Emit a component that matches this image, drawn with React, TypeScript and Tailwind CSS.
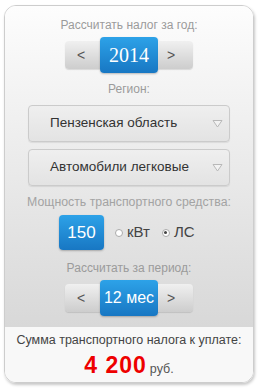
import React from "react";

function Stepper({ value, serif }: { value: string; serif?: boolean }) {
  return (
    <div className="flex items-center h-[36px]">
      <div className="w-[35px] h-[28px] rounded-l-[4px] bg-linear-to-b from-[#f0f0f0] to-[#cdcdcd] shadow-[0_1px_1px_rgba(0,0,0,0.12)] flex items-center pl-[12px] text-[14px] text-[#555] leading-none">
        &lt;
      </div>
      <div
        className={
          "w-[58px] h-[36px] rounded-[4px] bg-linear-to-b from-[#2da2e8] to-[#1877c3] shadow-[0_1px_2px_rgba(0,0,0,0.25)] flex items-center justify-center text-white leading-none " +
          (serif ? "font-['Liberation_Serif',serif] text-[20px]" : "text-[16px]")
        }
      >
        {value}
      </div>
      <div className="w-[35px] h-[28px] rounded-r-[4px] bg-linear-to-b from-[#f0f0f0] to-[#cdcdcd] shadow-[0_1px_1px_rgba(0,0,0,0.12)] flex items-center pl-[9px] text-[14px] text-[#555] leading-none">
        &gt;
      </div>
    </div>
  );
}

function Select({ label, className }: { label: string; className?: string }) {
  return (
    <div
      className={
        "w-[202px] h-[37px] rounded-[4px] border border-[#cbcbcb] bg-linear-to-b from-[#efefef] to-[#e3e3e3] shadow-[0_1px_1px_rgba(0,0,0,0.08)] flex items-center justify-between pl-[21px] pr-[6px] text-[13.5px] text-[#333] " +
        (className ?? "")
      }
    >
      <span>{label}</span>
      <svg width="11" height="9" viewBox="0 0 11 9">
        <path d="M1 1.5 H10 L5.5 8 Z" fill="#f2f2f2" stroke="#b8b8b8" strokeWidth="1" strokeLinejoin="round" />
      </svg>
    </div>
  );
}

function Radio({ checked }: { checked?: boolean }) {
  return (
    <span className="w-[8px] h-[8px] rounded-full border border-[#aaa] bg-white flex items-center justify-center">
      {checked && <span className="w-[3px] h-[3px] rounded-full bg-[#444]" />}
    </span>
  );
}

export default function App() {
  return (
    <div className="w-[262px] h-[388px] bg-white pt-[5px] pl-[4px] font-['Liberation_Sans',Arial,sans-serif]">
      <div className="w-[250px] h-[378px] rounded-[12px] border border-[#cdcdcd] overflow-hidden shadow-[1px_2px_3px_rgba(0,0,0,0.22)] flex flex-col">
        <div className="h-[321px] bg-linear-to-b from-[#fdfdfd] to-[#d8d8d8] flex flex-col items-center">
          <div className="mt-[11px] h-[16px] leading-[16px] text-[12px] text-[#9b9b9b]">
            Рассчитать налог за год:
          </div>
          <div className="mt-[4px]">
            <Stepper value="2014" serif />
          </div>
          <div className="mt-[8px] h-[16px] leading-[16px] text-[12px] text-[#9b9b9b]">Регион:</div>
          <Select label="Пензенская область" className="mt-[8px]" />
          <Select label="Автомобили легковые" className="mt-[7px]" />
          <div className="mt-[8px] h-[16px] leading-[16px] text-[12.3px] text-[#a3a3a3]">
            Мощность транспортного средства:
          </div>
          <div className="mt-[5px] h-[35px] flex items-center w-[136px] ml-[-4px]">
            <div className="w-[45px] h-[35px] rounded-[4px] bg-linear-to-b from-[#2da2e8] to-[#1877c3] shadow-[0_1px_2px_rgba(0,0,0,0.25)] flex items-center justify-center text-white text-[17px] leading-none">
              150
            </div>
            <div className="ml-[11px] flex items-center gap-[4px] text-[15px] text-[#444]">
              <Radio />
              <span>кВт</span>
            </div>
            <div className="ml-[12px] flex items-center gap-[4px] text-[15px] text-[#444]">
              <Radio checked />
              <span>ЛС</span>
            </div>
          </div>
          <div className="mt-[10px] h-[16px] leading-[16px] text-[12px] text-[#9b9b9b]">
            Рассчитать за период:
          </div>
          <div className="mt-[4px]">
            <Stepper value="12 мес" />
          </div>
        </div>
        <div className="flex-1 bg-[#f8f8f8] flex flex-col items-center">
          <div className="mt-[5px] h-[16px] leading-[16px] text-[12.5px] text-[#444]">
            Сумма транспортного налога к уплате:
          </div>
          <div className="mt-[5px] flex items-baseline leading-[24px]">
            <span className="text-[23px] font-bold text-[#ee0000] tracking-[1px]">4 200</span>
            <span className="ml-[3px] text-[12.5px] text-[#555]">руб.</span>
          </div>
        </div>
      </div>
    </div>
  );
}
